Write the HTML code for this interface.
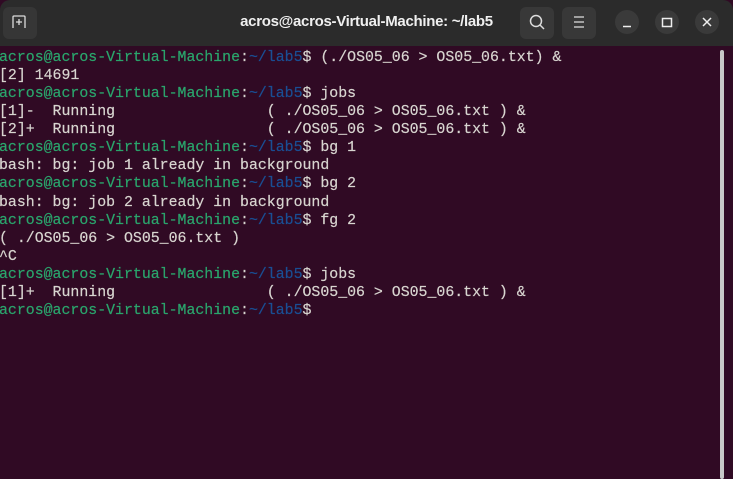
<!DOCTYPE html>
<html><head><style>
body{margin:0;width:733px;height:479px;overflow:hidden;background:#300a24;position:relative;font-family:"Liberation Sans",sans-serif}
.tb{position:absolute;left:0;top:0;width:733px;height:46px;background:#2b2b2b;border-radius:10px 10px 0 0}
.title{position:absolute;left:0;width:733px;top:13px;text-align:center;color:#f0f0f0;font-weight:bold;font-size:15px;letter-spacing:-0.3px}
.btn{position:absolute;top:7px;width:34px;height:32px;background:#383838;border-radius:6px}
.c{position:absolute;top:10px;width:24px;height:24px;border-radius:50%;background:#3a3a3a}
pre{position:absolute;left:-1px;top:49px;margin:0;font-family:"Liberation Mono",monospace;font-size:14.88px;line-height:18.07px;color:#d8d5d0;-webkit-text-stroke:0.2px #d8d5d0}
.g{color:#2aa56c;-webkit-text-stroke:0.2px #2aa56c}.b{color:#1a4f94;-webkit-text-stroke:0.2px #1a4f94}
.sb{position:absolute;left:720px;top:50px;width:4px;height:429px;background:#c8c8c8;border-radius:2px}
</style></head><body>
<div class="tb">
<div class="btn" style="left:3px;width:34px;background:#363636"></div>
<svg style="position:absolute;left:12px;top:15px" width="14" height="14" viewBox="0 0 14 14" fill="none" stroke="#ddd" stroke-width="1.3"><path d="M1 13V2a1 1 0 0 1 1-1h10a1 1 0 0 1 1 1v11M7 4v6M4 7h6"/></svg>
<div class="title">acros@acros-Virtual-Machine: ~/lab5</div>
<div class="btn" style="left:520px"></div>
<svg style="position:absolute;left:529px;top:14px" width="16" height="17" viewBox="0 0 16 17" fill="none" stroke="#ddd" stroke-width="1.5"><circle cx="7" cy="7" r="5.5"/><path d="M11 11l4 4"/></svg>
<div class="btn" style="left:562px"></div>
<svg style="position:absolute;left:572px;top:15px" width="14" height="14" viewBox="0 0 14 14" stroke="#ddd" stroke-width="1.3"><path d="M2 2h10M2 7h10M2 12h10"/></svg>
<div class="c" style="left:615px"></div><div class="c" style="left:655px"></div><div class="c" style="left:695px"></div>
<svg style="position:absolute;left:615px;top:10px" width="104" height="24" viewBox="0 0 104 24" fill="none" stroke="#eee" stroke-width="1.5"><path d="M8 16.5h8"/><rect x="47.5" y="8.5" width="9" height="8"/><path d="M88 8l8 8M96 8l-8 8"/></svg>
</div>
<pre><span class="g">acros@acros-Virtual-Machine</span>:<span class="b">~/lab5</span>$ (./OS05_06 &gt; OS05_06.txt) &amp;
[2] 14691
<span class="g">acros@acros-Virtual-Machine</span>:<span class="b">~/lab5</span>$ jobs
[1]-  Running                 ( ./OS05_06 &gt; OS05_06.txt ) &amp;
[2]+  Running                 ( ./OS05_06 &gt; OS05_06.txt ) &amp;
<span class="g">acros@acros-Virtual-Machine</span>:<span class="b">~/lab5</span>$ bg 1
bash: bg: job 1 already in background
<span class="g">acros@acros-Virtual-Machine</span>:<span class="b">~/lab5</span>$ bg 2
bash: bg: job 2 already in background
<span class="g">acros@acros-Virtual-Machine</span>:<span class="b">~/lab5</span>$ fg 2
( ./OS05_06 &gt; OS05_06.txt )
^C
<span class="g">acros@acros-Virtual-Machine</span>:<span class="b">~/lab5</span>$ jobs
[1]+  Running                 ( ./OS05_06 &gt; OS05_06.txt ) &amp;
<span class="g">acros@acros-Virtual-Machine</span>:<span class="b">~/lab5</span>$</pre>
<div class="sb"></div>
</body></html>
